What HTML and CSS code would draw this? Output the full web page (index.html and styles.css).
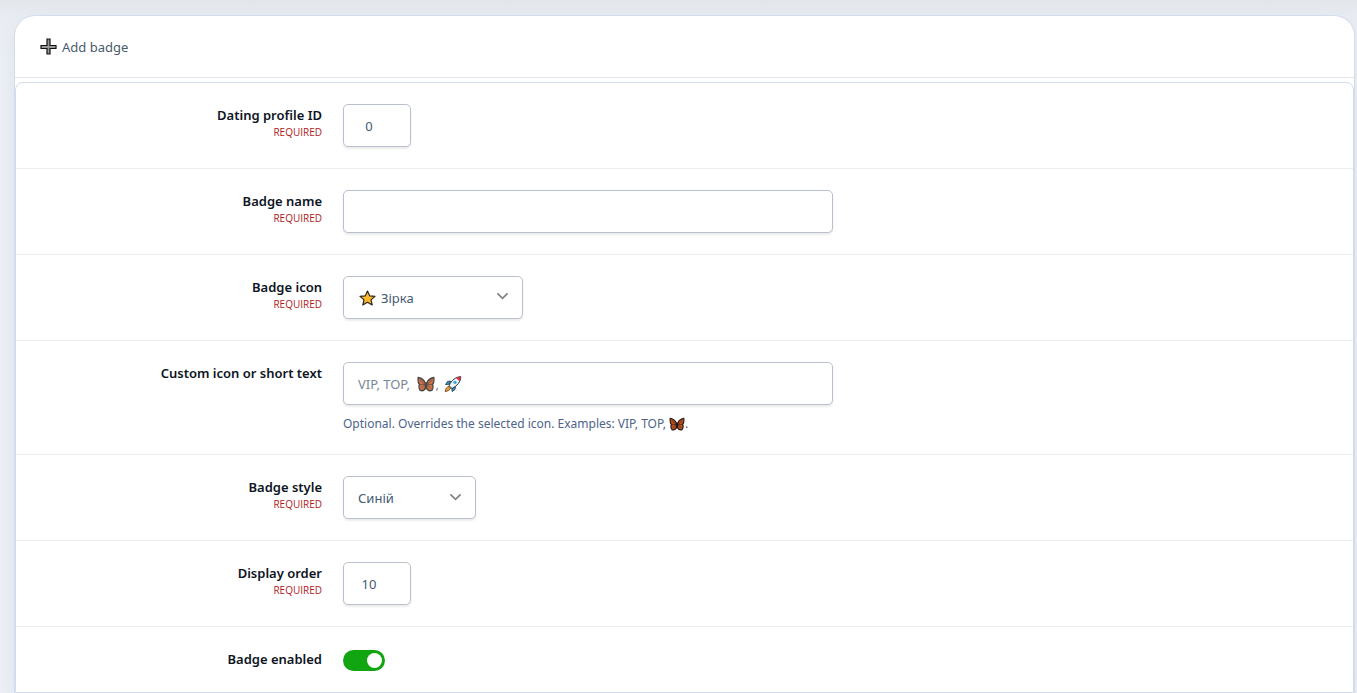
FILE: index.html
```html
<!DOCTYPE html>
<html lang="en">
<head>
<meta charset="utf-8">
<meta name="viewport" content="width=device-width, initial-scale=1">
<title>Add badge</title>
<link rel="stylesheet" href="styles.css">
</head>
<body>
<svg class="sprite" aria-hidden="true">
  <symbol id="butterfly" viewBox="0 0 18 16">
    <path d="M8.300 7.500C7.500 4.500 5 2.200 1.200 1.500c-.4 2.500-.2 5 1.300 7-.7 1.500-.3 4.500.8 6 2 .6 4.200-.5 5-2.500zM9.700 7.500c.8-3 3.300-5.300 7.100-6 .4 2.500.2 5-1.300 7 .7 1.500.3 4.500-.8 6-2 .6-4.200-.5-5-2.500z" fill="#c4501b" stroke="#201815" stroke-width="1.300"/>
    <path d="M3 4l5 4.500-4 4M15 4l-5 4.500 4 4M2.500 8.500h13" fill="none" stroke="#3a211a" stroke-width=".7"/>
    <path d="M9 6v7.500" stroke="#171717" stroke-width="1.400" fill="none"/>
  </symbol>
</svg>
<main class="page">
  <section class="card">
    <h1 class="card-title">
      <svg class="plus" viewBox="0 0 17 17" aria-hidden="true"><path d="M7 1h3v6.500h6v3h-6V16H7v-5.500H1v-3h6z" fill="#999" stroke="#111" stroke-width="1.200"/></svg>
      Add badge
    </h1>
    <form class="form">
      <div class="row">
        <div class="label"><label for="profile">Dating profile ID</label><span class="required">REQUIRED</span></div>
        <div class="field"><input class="control number" id="profile" type="text" inputmode="numeric" value="0"></div>
      </div>
      <div class="row">
        <div class="label"><label for="name">Badge name</label><span class="required">REQUIRED</span></div>
        <div class="field"><input class="control text" id="name" type="text"></div>
      </div>
      <div class="row">
        <div class="label"><label for="icon">Badge icon</label><span class="required">REQUIRED</span></div>
        <div class="field">
          <div class="select-box icon-select">
            <select class="control" id="icon"><option>Зірка</option></select>
            <svg class="star" viewBox="0 0 17 16" aria-hidden="true"><path d="M8.500 1l2.200 4.800 5.300.6-4 3.500 1.200 5.100-4.700-2.700L3.800 15 5 9.900 1 6.400l5.300-.6z" fill="#fdb82b" stroke="#2b2620" stroke-width="1.200" stroke-linejoin="round"/></svg>
            <svg class="chevron raised" viewBox="0 0 14 8" aria-hidden="true"><path d="M1.500 1.200L7 6.500l5.500-5.300"/></svg>
          </div>
        </div>
      </div>
      <div class="row">
        <div class="label"><label for="custom">Custom icon or short text</label></div>
        <div class="field">
          <div class="hinted">
            <input class="control text" id="custom" type="text" placeholder=" ">
            <span class="hint" aria-hidden="true">VIP, TOP, <svg class="glyph" viewBox="0 0 18 16"><use href="#butterfly"/></svg>, <svg class="glyph rocket" viewBox="0 0 18 16">
              <path d="M6.500 5L3.500 5.500 1.500 8.500l4-.3zM11.500 10.500l-.5 3-3 2-.2-4z" fill="#2d9ad1" stroke="#263238" stroke-width=".8"/>
              <path d="M5 10.500c-2 .3-3.500 2-3.800 5 2.800-.3 4.800-1.500 5.300-3.500z" fill="#f6a12d" stroke="#4a3322" stroke-width=".8"/>
              <path d="M16.800.7c-5 .1-9.300 3.500-11.800 9l3 2.800c5.300-2.700 8.700-6.800 8.800-11.800z" fill="#eef5f8" stroke="#26313a" stroke-width="1"/>
              <path d="M16.800.7c-1.800 0-3.200.5-4.700 1.300l3.400 3.200c.8-1.500 1.300-3 1.300-4.500z" fill="#d82f42"/>
              <circle cx="11" cy="6.300" r="1.600" fill="#35a8dc"/></svg></span>
          </div>
          <p class="help">Optional. Overrides the selected icon. Examples: VIP, TOP, <svg class="glyph small" viewBox="0 0 18 16" aria-hidden="true"><use href="#butterfly"/></svg>.</p>
        </div>
      </div>
      <div class="row">
        <div class="label"><label for="style">Badge style</label><span class="required">REQUIRED</span></div>
        <div class="field">
          <div class="select-box style-select">
            <select class="control" id="style"><option>Синій</option></select>
            <svg class="chevron" viewBox="0 0 14 8" aria-hidden="true"><path d="M1.500 1.200L7 6.500l5.500-5.300"/></svg>
          </div>
        </div>
      </div>
      <div class="row">
        <div class="label"><label for="order">Display order</label><span class="required">REQUIRED</span></div>
        <div class="field"><input class="control number" id="order" type="text" inputmode="numeric" value="10"></div>
      </div>
      <div class="row">
        <div class="label"><label for="enabled">Badge enabled</label></div>
        <div class="field"><input class="toggle" id="enabled" type="checkbox" role="switch" checked></div>
      </div>
    </form>
  </section>
</main>
</body>
</html>
```
FILE: styles.css
```css
* { box-sizing: border-box; }

body {
  margin: 0;
  background: #edf0f6;
  color: #435a72;
  font: 13px/20px "Noto Sans", sans-serif;
}

.sprite { position: absolute; width: 0; height: 0; }

.page {
  padding: 15px 2px 0 14px;
  background: linear-gradient(#e2e5ea, #e9edf3 15px, transparent 60px);
}

.card {
  border: 1px solid #d3dcec;
  border-bottom: 0;
  border-radius: 21px 21px 0 0;
  background: #fff;
  box-shadow: 0 8px 24px rgba(30, 50, 90, .07);
}

.card-title {
  display: flex;
  align-items: center;
  gap: 5px;
  height: 62px;
  margin: 0 0 4px;
  padding: 0 25px;
  border-bottom: 1px solid #e0e4f0;
  color: #4a5b6c;
  font-size: 13px;
  font-weight: 400;
}

.plus { width: 17px; height: 17px; }

.form {
  border: 1px solid #d3dcec;
  border-radius: 8px 8px 0 0;
}

.row {
  display: grid;
  grid-template-columns: 306px minmax(0, 1fr);
  gap: 21px;
  padding: 21px 20px 21px 0;
  border-bottom: 1px solid #ebecef;
}

.row:last-child { border-bottom: 0; }

.label {
  display: flex;
  flex-direction: column;
  padding-top: 2px;
  color: #0d1422;
  font-weight: 600;
  line-height: 18px;
  text-align: right;
}

.required {
  color: #ad1a1a;
  font-family: "Open Sans", sans-serif;
  font-size: 10px;
  font-weight: 400;
  line-height: 16px;
}

.control {
  display: block;
  width: 100%;
  height: 43px;
  padding: 0 14px;
  border: 1px solid #b9bfce;
  border-radius: 5px;
  outline: 0;
  appearance: none;
  background: #fff;
  box-shadow: 0 2px 2px rgba(0, 0, 0, .08);
  color: #435a72;
  font: inherit;
}

.number {
  width: 68px;
  padding-right: 30px;
  text-align: center;
}

.text { max-width: 490px; }

.select-box, .hinted { position: relative; }
.icon-select { width: 180px; }
.icon-select .control { padding-left: 37px; }
.style-select { width: 133px; }

.star {
  position: absolute;
  top: 14px;
  left: 16px;
  width: 17px;
  height: 16px;
}

.chevron {
  position: absolute;
  top: 17px;
  right: 14px;
  width: 13px;
  height: 8px;
  fill: none;
  stroke: #808080;
  stroke-width: 1.8;
}

.chevron.raised { top: 16px; }

.hint {
  position: absolute;
  top: 12px;
  left: 15px;
  color: #7b8797;
  pointer-events: none;
}

.hinted .control:not(:placeholder-shown) + .hint { display: none; }

.glyph {
  width: 18px;
  height: 16px;
  vertical-align: -3px;
}

.hint .glyph { margin-left: 4px; opacity: .8; }
.hint .rocket { margin-left: 2px; opacity: 1; }
.glyph.small { width: 16px; height: 14px; }

.help {
  margin: 10px 0 0;
  color: #4d648a;
  font-size: 12px;
  line-height: 18px;
}

.toggle {
  display: flex;
  justify-content: flex-end;
  align-items: center;
  width: 42px;
  height: 21px;
  margin: 2px 0 0;
  padding: 3px;
  border-radius: 11px;
  appearance: none;
  background: #8a94a3;
}

.toggle:checked { background: #12a512; }
.toggle:not(:checked) { justify-content: flex-start; }

.toggle::before {
  width: 15px;
  height: 15px;
  border-radius: 50%;
  background: #fff;
  content: "";
}
```
